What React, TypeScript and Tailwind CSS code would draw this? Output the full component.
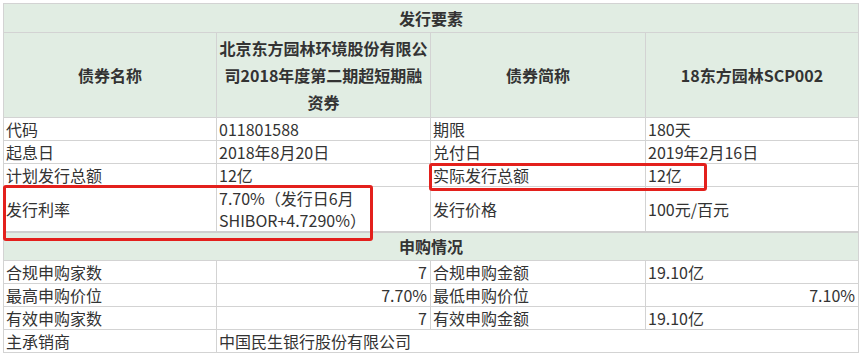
const cell = "border border-[#d3d3d3] px-[2px] align-middle";
const label = `${cell} text-left`;
const value = `${cell} text-left`;
const num = `${cell} text-right pr-[3px]`;

type Row = [string, string, string, string, boolean?, boolean?];

const issueRows: Row[] = [
  ["代码", "011801588", "期限", "180天"],
  ["起息日", "2018年8月20日", "兑付日", "2019年2月16日"],
  ["计划发行总额", "12亿", "实际发行总额", "12亿"],
];

const bidRows: Row[] = [
  ["合规申购家数", "7", "合规申购金额", "19.10亿", true, false],
  ["最高申购价位", "7.70%", "最低申购价位", "7.10%", true, true],
  ["有效申购家数", "7", "有效申购金额", "19.10亿", true, false],
];

export default function App() {
  return (
    <div
      className="relative w-[862px] h-[358px] bg-white pl-[3px] pt-[3px] text-[#333] text-[16px] leading-[22px]"
      style={{ fontFamily: '"Microsoft YaHei", "Noto Sans CJK SC", sans-serif' }}
    >
      <table className="w-[855px] table-fixed border-collapse">
        <colgroup>
          <col className="w-[213px]" />
          <col className="w-[214px]" />
          <col className="w-[215px]" />
          <col className="w-[213px]" />
        </colgroup>
        <tbody>
          <tr className="h-[29px] bg-[#e1ede3]">
            <td colSpan={4} className={`${cell} text-center font-bold`}>
              发行要素
            </td>
          </tr>
          <tr className="h-[85px] bg-[#e1ede3] font-bold">
            <td className={`${cell} text-center`}>债券名称</td>
            <td className={`${cell} text-center leading-[27px]`}>
              北京东方园林环境股份有限公司2018年度第二期超短期融资券
            </td>
            <td className={`${cell} text-center`}>债券简称</td>
            <td className={`${cell} text-center`}>18东方园林SCP002</td>
          </tr>
          {issueRows.map((r) => (
            <tr key={r[0]} className="h-[23px]">
              <td className={label}>{r[0]}</td>
              <td className={value}>{r[1]}</td>
              <td className={label}>{r[2]}</td>
              <td className={value}>{r[3]}</td>
            </tr>
          ))}
          <tr className="h-[45px] border-b-2 border-[#cfcfcf]">
            <td className={label}>发行利率</td>
            <td className={value}>7.70%（发行日6月SHIBOR+4.7290%）</td>
            <td className={label}>发行价格</td>
            <td className={value}>100元/百元</td>
          </tr>
          <tr className="h-[28px] bg-[#e1ede3]">
            <td colSpan={4} className={`${cell} text-center font-bold`}>
              申购情况
            </td>
          </tr>
          {bidRows.map((r) => (
            <tr key={r[0]} className="h-[23px]">
              <td className={label}>{r[0]}</td>
              <td className={r[4] ? num : value}>{r[1]}</td>
              <td className={label}>{r[2]}</td>
              <td className={r[5] ? num : value}>{r[3]}</td>
            </tr>
          ))}
          <tr className="h-[23px]">
            <td className={label}>主承销商</td>
            <td colSpan={3} className={value}>中国民生银行股份有限公司</td>
          </tr>
        </tbody>
      </table>

      {/* red highlight boxes */}
      <div className="absolute left-[3px] top-[185px] w-[370px] h-[56px] border-[3px] border-[#e3201c] rounded-[3px] pointer-events-none" />
      <div className="absolute left-[429px] top-[163px] w-[278px] h-[28px] border-[3px] border-[#e3201c] rounded-[3px] pointer-events-none" />
    </div>
  );
}
